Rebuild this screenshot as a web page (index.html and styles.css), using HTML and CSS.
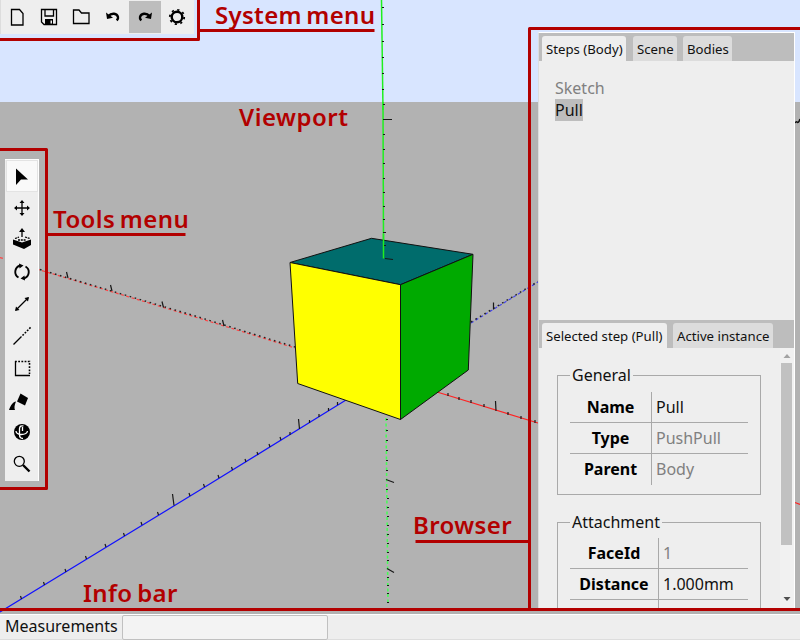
FILE: index.html
```
<!DOCTYPE html>
<html lang="en">
<head>
<meta charset="utf-8">
<title>Modeler</title>
<link rel="stylesheet" href="styles.css">
</head>
<body>
<div class="app">
  <main class="viewport">
    <svg class="scene" viewBox="0 0 800 614">
      <path class="sky" d="M0 0H800V102H0z"/>
      <path class="axis y" d="M381.5 0L383 110"/>
      <path class="axis y" d="M383 102L383.5 250"/>
      <path class="axis y dash" d="M386 418L388 605"/>
      <path class="axis x dash" d="M0 257.5L40 270L200 318.5L295 348"/>
      <path class="axis x" d="M437 392L538 423M795 502.500L800 504.500"/>
      <path class="axis z" d="M0 612L200 490L346 400"/>
      <path class="axis z dash" d="M471 323L538 282"/>
      <path class="reddots" d="M40 269.500L200 317.500L295 347"/>
      <path class="reddots" d="M471 322L538 281.500"/>
      <path class="tick" d="M382 7.500h2M382 24.500h2M382 41.500h2M382 57.500h2M382 73.500h2M382 89.500h2M383 104.500h2M383 119.500h9M383 134.500h2M383 149.500h2M383 163.500h2M383 178.500h2M383 192.500h2M383 206.500h2M383 219.500h2M383 232.500h2"/>
      <path class="tick" d="M386 419.500h2M386 430.500h2M386 440.500h2M386 450.500h2M386 460.500h2M386 470.500h2M386 479.500l8 3M386 489.500h2M387 498.500h2M387 507.500h2M387 516.500h2M387 525.500h2M387 534.500h2M387 543.500h2M387 552.500h2M387 560.500h2M387 568.500l7 4M387 577.500h2M387 585.500h2M387 593.500h2M387 602.500h2"/>
      <path class="tick" d="M68 278l-1.500-6M112 291l-1.500-6M163.500 307.500l-1.500-6M224 326l-1.500-6M448 396v-3M459 400v-3M471 403v-3M484 407v-3M496 411l-.500-10M508 415v-3M521 419v-3M535 423v-3M493.500 309.500v-7"/>
      <path class="tick" d="M21.500 599l-1-3M44.500 585l-1-3M66 572l-1-3M86.500 559l-1-3M106 547l-1-3M124.500 536l-1-3M142 525l-1-3M158.500 515l-1-3M174 505.500l-1.500-11.500M190 496l-1-3M204.500 487l-1-3M219 478l-1-3M232.500 470l-1-3M246 462l-1-3M258 455l-1-3M270 447l-1-3M281 440l-1-3M299.500 429l-1-10M309.500 423v-3M319 417v-3M328.500 411v-3M337.500 405v-3M290 435v-3"/>
      <g class="cube">
        <path fill="#006c6c" d="M290 262.500L371.500 238.300L473 254.300L400.500 284.700z"/>
        <path fill="#ff0" d="M290 262.500L400.500 284.700V419.500L297.700 383.500z"/>
        <path fill="#0a0" d="M400.500 284.700L473 254.300L468.300 370L400.500 419.500z"/>
      </g>
      <path class="axis y" d="M383.500 234V258.500"/>
      <path class="tick" d="M384 232.500h2M384 245.500h2M385 258.500l8 1"/>
      <path class="cursor" d="M795 123q1-2 2.500-.5q1.500 0 2.500-3.500"/>
      <g class="guides">
        <path d="M0 39.500H198.500V0M200 30.500H374.500"/>
        <path d="M0 149.500H46.500V488.500H0M46.500 234.500H185.500"/>
        <path d="M800 28.500H529.500V608M415.500 541.500H529.500M0 609.500H800"/>
      </g>
    </svg>

    <span class="note n-system">System menu</span>
    <span class="note n-view">Viewport</span>
    <span class="note n-tools">Tools menu</span>
    <span class="note n-browser">Browser</span>
    <span class="note n-info">Info bar</span>

    <nav class="system">
      <button class="btn"><svg viewBox="0 0 32 32"><path class="l" d="M10.500 8.500h8l3.500 4v11.500h-11.500z"/></svg></button>
      <button class="btn"><svg viewBox="0 0 32 32"><path class="l" d="M8.500 8.500h15v15h-12.500l-2.500-2.500zM12 8.500v6.500h8.500v-6.500"/><path d="M12 18h8v5h-8z"/><path fill="#eee" d="M17.500 19.500h1.500v3h-1.500z"/></svg></button>
      <button class="btn"><svg viewBox="0 0 32 32"><path class="l" d="M8.500 22.500V9h5.500l2.500 3h7.500v10.500z"/></svg></button>
      <button class="btn"><svg viewBox="0 0 32 32"><path class="l fat" d="M11 15.500c4-4.500 9-3 10 .5c.4 1.500-.3 2.500-1.200 3.500"/><path d="M9 11.500l1 6.500l6-1.200z"/></svg></button>
      <button class="btn pressed"><svg viewBox="0 0 32 32"><path class="l fat" d="M21 15.500c-4-4.500-9-3-10 .5c-.4 1.500.3 2.500 1.200 3.500"/><path d="M23 11.500l-1 6.500l-6-1.200z"/></svg></button>
      <button class="btn"><svg viewBox="0 0 32 32"><circle class="l fat" cx="16" cy="16" r="5.300"/><circle class="teeth" cx="16" cy="16" r="7.200"/></svg></button>
    </nav>

    <nav class="tools">
      <button class="btn active"><svg viewBox="0 0 32 32"><path d="M10 8.500l12 11h-7l-5 5.500z"/></svg></button>
      <button class="btn"><svg viewBox="0 0 32 32"><path class="l" d="M16 9v14M9 16h14"/><path d="M16 8l2.500 3h-5zM16 24l2.500-3h-5zM8 16l3-2.500v5zM24 16l-3-2.500v5z"/></svg></button>
      <button class="btn"><svg viewBox="0 0 32 32"><path d="M7 15.500l9 3l9-3v5.500l-7 4l-11-4.500z"/><path class="l" d="M16 6v7"/><path class="l" stroke-dasharray="2 .8" d="M9 14.500l4-1.500M19 13l5 1.500M12 16h8"/><path d="M16 4l3 4h-6z"/></svg></button>
      <button class="btn"><svg viewBox="0 0 32 32"><path class="l ring" d="M14 9.500c-5.500 2-6.500 9-1.500 12M18 22.500c5.500-2 6.500-9 1.500-12"/><path d="M13 7.500l4.500 2l-4 3zM19 24.500l-4.500-2l4-3z"/></svg></button>
      <button class="btn"><svg viewBox="0 0 32 32"><path class="l" d="M10 22L22 10"/><path d="M23 9l-1 4.500l-3.500-3.500zM9 23l1-4.500l3.500 3.500z"/></svg></button>
      <button class="btn"><svg viewBox="0 0 32 32"><path class="l" stroke-width="1.600" d="M7.500 24.500l8-8"/><path class="l dots" d="M16.500 15.500L25 7"/></svg></button>
      <button class="btn"><svg viewBox="0 0 32 32"><path class="l" d="M9.500 9v14.500H24"/><path class="l dots" d="M9 9.500h14.500V22"/></svg></button>
      <button class="btn"><svg viewBox="0 0 32 32"><path d="M14.500 9.500l7.500 4.500l-3 7.500l-8-4z"/><path d="M10 17.500c-3 .5-5 3-7 8.500h6c-1-2-.5-5 1-8.500z"/></svg></button>
      <button class="btn"><svg viewBox="0 0 32 32"><circle cx="16" cy="16" r="8"/><path class="white" d="M17.500 10q-3.500-1-4 2.500v6q0 4 3.500 4M10 15q0 3 5 3.500q6 0 6.500-3.500M16.500 11v4"/></svg></button>
      <button class="btn"><svg viewBox="0 0 32 32"><circle class="l" cx="13.300" cy="13.300" r="5"/><path class="l fat" d="M17 17l6.500 6.500"/></svg></button>
    </nav>

    <aside class="browser">
      <div class="tabs">
        <span class="tab on t1">Steps (Body)</span><span class="tab t2">Scene</span><span class="tab t3">Bodies</span>
      </div>
      <div class="steps">
        <div class="muted">Sketch</div>
        <div><span class="chosen">Pull</span></div>
      </div>
      <div class="tabs">
        <span class="tab on t4">Selected step (Pull)</span><span class="tab t5">Active instance</span>
      </div>
      <div class="details">
        <div class="forms">
          <fieldset>
            <legend>General</legend>
            <div class="grid general">
              <b>Name</b><span>Pull</span>
              <b>Type</b><span class="muted">PushPull</span>
              <b>Parent</b><span class="muted">Body</span>
            </div>
          </fieldset>
          <fieldset class="second">
            <legend>Attachment</legend>
            <div class="grid attach">
              <b>FaceId</b><span class="muted">1</span>
              <b>Distance</b><span>1.000mm</span>
              <b></b><span></span>
            </div>
          </fieldset>
        </div>
        <div class="scroll">
          <svg viewBox="0 0 14 15"><path fill="#a3a3a3" d="M3.500 10L7 6l3.500 4z"/></svg>
          <div class="thumb"></div>
          <svg class="down" viewBox="0 0 14 15"><path fill="#505050" d="M3.500 5h7L7 9z"/></svg>
        </div>
      </div>
    </aside>
  </main>
  <footer class="info"><label for="m">Measurements</label><input id="m"></footer>
</div>
</body>
</html>
```

FILE: styles.css
```
* { box-sizing: border-box; }
body { margin: 0; font: 16px/22px "Noto Sans", sans-serif; color: #111; }
.app { width: 800px; height: 640px; overflow: hidden; display: flex; flex-direction: column; }
.viewport { position: relative; height: 614px; background: #b2b2b2; overflow: hidden; }
.scene { display: block; width: 800px; height: 614px; }
.sky { fill: #d8e5ff; }
.axis { fill: none; stroke-width: 1.2; }
.axis.x { stroke: #f22; }
.axis.y { stroke: #1fef1f; stroke-width: 1.5; }
.axis.z { stroke: #11f; }
.axis.dash { stroke-dasharray: 3 2.5; }
.axis.x.dash { stroke: #f44; }
.axis.y.dash { stroke: #4f5; }
.axis.z.dash { stroke: #44e; }
.tick { fill: none; stroke: #181818; stroke-width: 1.2; }
.reddots { fill: none; stroke: #222; stroke-width: 1.5; stroke-dasharray: 1.6 3.6; }
.cube path { stroke: #111; stroke-width: 1; stroke-linejoin: round; }
.cursor { fill: none; stroke: #111; stroke-width: 1.5; }
.guides { fill: none; stroke: #b20000; stroke-width: 3; stroke-linejoin: round; }

.note { position: absolute; font-size: 24px; line-height: 30px; font-weight: 600; color: #b20000; white-space: nowrap; letter-spacing: .4px; word-spacing: -2px; }
.n-system { left: 215px; top: 0; letter-spacing: .3px; }
.n-view { left: 239px; top: 102px; letter-spacing: .5px; }
.n-tools { left: 53px; top: 204px; }
.n-browser { left: 413px; top: 510px; }
.n-info { left: 83px; top: 578px; }

.system { position: absolute; left: 0; top: 0; display: flex; padding: 1px; background: #eee; box-shadow: inset 1px 0 #ddd; }
.tools { position: absolute; left: 5px; top: 159px; display: flex; flex-direction: column; padding: 1px 0 0 1px; background: #eee; border-right: 1px solid #fff; border-top: 1px solid #fff; padding-top: 0; padding-bottom: 1px; }
.btn { display: block; width: 32px; height: 32px; padding: 0; border: 0; background: none; }
.btn svg { display: block; width: 32px; height: 32px; }
.pressed { background: #bdbdbd; }
.active { background: #f9f9f9; box-shadow: inset 0 0 0 1px #e3e3e3; }
.l { fill: none; stroke: #000; stroke-width: 1.3; }
.fat { stroke-width: 2.4; }
.ring { stroke-width: 1.9; }
.dots { stroke-width: 1.6; stroke-dasharray: 1.8 1.4; }
.teeth { fill: none; stroke: #000; stroke-width: 1.8; stroke-dasharray: 2.2 3.455; }
.white { fill: none; stroke: #fff; stroke-width: 1.3; }

.browser { position: absolute; left: 538px; top: 32px; width: 257px; height: 576px; background: #eee; border: 1px solid #fff; border-left-color: #ddd; border-bottom: 0; display: flex; flex-direction: column; }
.tabs { flex: none; height: 28px; display: flex; align-items: flex-end; padding-left: 3px; background: #bdbdbd; }
.tab { height: 25px; padding-left: 4px; font-size: 13.2px; line-height: 26px; white-space: nowrap; background: #dcdcdc; border-radius: 3px 3px 0 0; }
.tab.on { background: #eee; }
.t1 { width: 84px; margin-right: 7px; }
.t2 { width: 44px; margin-right: 6px; }
.t3 { width: 49px; }
.t4 { width: 125px; margin-right: 6px; }
.t5 { width: 100px; }
.steps { flex: none; height: 259px; padding: 16px; }
.muted { color: #808080; }
.chosen { background: #bdbdbd; }
.details { flex: 1; min-height: 0; display: flex; overflow: hidden; }
.forms { width: 241px; padding: 16px 19px 0 18px; }
fieldset { margin: 0 0 16px; padding: 6px 12px 10px; height: 131px; border: 1px solid #a9a9a9; min-width: 0; }
.second { padding-top: 5px; }
legend { padding: 0 2px; }
.grid { display: grid; grid-auto-rows: 31px; line-height: 30px; width: 178px; }
.general { grid-template-columns: 81px 97px; }
.attach { grid-template-columns: 88px 90px; }
.grid b { text-align: center; color: #000; border-bottom: 1px solid #a9a9a9; }
.grid span { border-left: 1px solid #a9a9a9; border-bottom: 1px solid #a9a9a9; padding-left: 4px; }
.grid > :nth-last-child(-n+2) { border-bottom: 0; }
.scroll { width: 14px; display: flex; flex-direction: column; background: #f1f1f1; }
.scroll svg { display: block; width: 14px; height: 15px; }
.thumb { width: 11px; height: 182px; margin-left: 1px; background: #c1c1c1; }
.down { margin-top: auto; margin-bottom: 1px; }

.info { height: 26px; display: flex; background: #eee; border-top: 1px solid #fff; border-bottom: 1px solid #ddd; padding-left: 5px; }
.info label { width: 117px; }
.info input { width: 206px; height: 25px; border: 1px solid #c0c0c0; border-radius: 2px; background: #f3f3f3; }
```
